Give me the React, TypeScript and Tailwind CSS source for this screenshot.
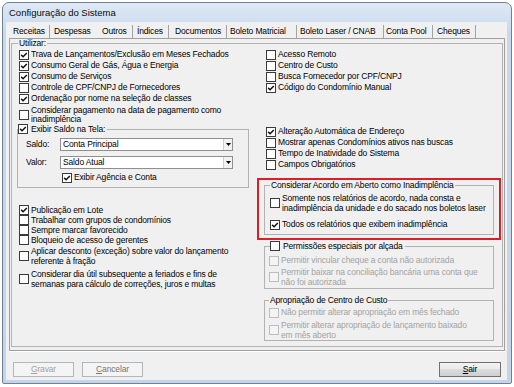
import type { ReactNode } from "react";

const FONT = "font-['Liberation_Sans',Arial,sans-serif]";

function Box({ checked = false, disabled = false }: { checked?: boolean; disabled?: boolean }) {
  return (
    <span
      className={`flex h-[10px] w-[10px] shrink-0 items-center justify-center border ${
        disabled ? "border-[#bdbdbd] bg-[#f4f4f4]" : "border-[#3a3a3a] bg-white"
      }`}
    >
      {checked && (
        <svg viewBox="0 0 8 8" className="h-[8px] w-[8px]">
          <path d="M1.2 3.9 L3.1 5.8 L6.8 1.9" fill="none" stroke="#111" strokeWidth="1.5" />
        </svg>
      )}
    </span>
  );
}

function Check({
  label,
  checked = false,
  disabled = false,
  multi = false,
  tall = "h-[11px]",
  className = "",
}: {
  label: ReactNode;
  checked?: boolean;
  disabled?: boolean;
  multi?: boolean;
  tall?: string;
  className?: string;
}) {
  return (
    <div className={`flex items-center gap-[2px] ${multi ? "" : tall} ${className}`}>
      <Box checked={checked} disabled={disabled} />
      <span
        className={`whitespace-nowrap ${multi ? "leading-[10px]" : "leading-[11px]"} ${
          disabled ? "text-[#a3a3a3]" : "text-black"
        }`}
      >
        {label}
      </span>
    </div>
  );
}

function Combo({ value }: { value: string }) {
  return (
    <div className="flex h-[13px] w-[173px] items-center border border-[#8f8f8f] bg-white">
      <span className="flex-1 pl-[2px] leading-[11px]">{value}</span>
      <span className="flex h-full w-[9px] items-center justify-center border-l border-[#cfcfcf] bg-[#f2f2f2]">
        <svg width="5" height="3" viewBox="0 0 5 3">
          <path d="M0 0h5L2.5 3z" fill="#000" />
        </svg>
      </span>
    </div>
  );
}

function Btn({ children, tone }: { children: ReactNode; tone: "off" | "dim" | "on" }) {
  const look =
    tone === "on"
      ? "w-[62px] border-[#707070] bg-[linear-gradient(#f2f2f2,#ebebeb_45%,#dddddd_50%,#cfcfcf)] text-black"
      : tone === "dim"
        ? "w-[61px] border-[#b3b7ba] bg-[#f4f4f4] text-[#767676]"
        : "w-[61px] border-[#b3b7ba] bg-[#f4f4f4] text-[#a2a2a2]";
  return (
    <div className={`flex h-[15px] items-center justify-center border leading-[11px] ${look}`}>{children}</div>
  );
}

const tabs = [
  { label: "Receitas", cls: "w-[40px] pl-[4px]", sep: true },
  { label: "Despesas", cls: "w-[49px] pl-[4px]", sep: false },
  { label: "Outros", cls: "w-[33px] pl-[3px]", sep: true },
  { label: "Índices", cls: "w-[35px] pl-[4px]", sep: true },
  { label: "Documentos", cls: "w-[57px] pl-[6px]", sep: true },
  { label: "Boleto Matricial", cls: "w-[69px] pl-[3px]", sep: true },
  { label: "Boleto Laser / CNAB", cls: "w-[86px] pl-[3px]", sep: true },
  { label: "Conta Pool", cls: "w-[48px] pl-[2px]", sep: true },
  { label: "Cheques", cls: "w-[42px] pl-[4px]", sep: true },
];

export default function App() {
  return (
    <div className={`h-[387px] w-[514px] bg-white pl-[2px] pt-[2px] text-[8.5px] text-black ${FONT}`}>
      <div className="flex h-[382px] w-[510px] flex-col rounded-t-[7px] rounded-b-[2px] border border-[#6f7f94] bg-[linear-gradient(#dfe9f6,#c8d8ec_30px,#c4d5ea)] pb-[3px] pl-[3px] pr-[4px]">
        {/* title bar */}
        <div className="flex h-[19px] items-center pl-[3px] pt-[1px] text-[9.5px] text-[#0b0b0b]">
          Configuração do Sistema
        </div>

        <div className="flex flex-1 flex-col bg-[#f0f0f0] tracking-[-0.15px]">
          {/* tab strip */}
          <div className="flex h-[16px] items-start pl-[3px]">
            {tabs.map((t) => (
              <div key={t.label} className="flex items-start">
                <div className={`flex h-[16px] items-center whitespace-nowrap pt-[2px] ${t.cls}`}>{t.label}</div>
                {t.sep && <div className="mt-[3px] h-[13px] w-px bg-[#a3a3a3]" />}
              </div>
            ))}
          </div>

          {/* tab page */}
          <div className="ml-[3px] flex h-[313px] w-[496px] flex-col border border-[#a0a0a0] px-[1px] pb-[3px] shadow-[0_1px_0_#fff]">
            <fieldset className="min-w-0 flex-1 border border-[#b2b2b2]">
              <legend className="ml-[6px] px-[1px] leading-[9px]">Utilizar:</legend>
              <div className="flex">
                {/* left column */}
                <div className="flex w-[245px] flex-col pl-[7px] pt-[1px]">
                  <Check checked label="Trava de Lançamentos/Exclusão em Meses Fechados" />
                  <Check checked label="Consumo Geral de Gás, Água e Energia" />
                  <Check checked label="Consumo de Serviços" />
                  <Check label="Controle de CPF/CNPJ de Fornecedores" />
                  <Check checked label="Ordenação por nome na seleção de classes" />
                  <div className="flex items-center gap-[2px] pt-[2px]">
                    <Box />
                    <span className="leading-[9px]">
                      Considerar pagamento na data de pagamento como
                      <br />
                      inadimplência
                    </span>
                  </div>

                  <fieldset className="-ml-[2px] w-[232px] border border-[#b2b2b2] pb-[4px]">
                    <legend className="flex items-center gap-[3px] pr-[2px] leading-[10px]">
                      <Box checked />
                      Exibir Saldo na Tela:
                    </legend>
                    <div className="mt-[4px] flex items-center pl-[8px]">
                      <span className="w-[34px]">Saldo:</span>
                      <Combo value="Conta Principal" />
                    </div>
                    <div className="mt-[5px] flex items-center pl-[8px]">
                      <span className="w-[34px]">Valor:</span>
                      <Combo value="Saldo Atual" />
                    </div>
                    <Check checked className="mt-[3px] pl-[44px]" label="Exibir Agência e Conta" />
                  </fieldset>

                  <Check checked tall="h-[10px]" className="mt-[17px]" label="Publicação em Lote" />
                  <Check tall="h-[10px]" label="Trabalhar com grupos de condomínios" />
                  <Check tall="h-[10px]" label="Sempre marcar favorecido" />
                  <Check tall="h-[10px]" label="Bloqueio de acesso de gerentes" />
                  <Check
                    multi
                    className="mt-[1px]"
                    label={
                      <>
                        Aplicar desconto (exceção) sobre valor do lançamento
                        <br />
                        referente à fração
                      </>
                    }
                  />
                  <Check
                    multi
                    className="mt-[3px]"
                    label={
                      <>
                        Considerar dia útil subsequente a feriados e fins de
                        <br />
                        semanas para cálculo de correções, juros e multas
                      </>
                    }
                  />
                </div>

                {/* right column */}
                <div className="flex flex-1 flex-col pt-[1px]">
                  <Check className="pl-[9px]" label="Acesso Remoto" />
                  <Check className="pl-[9px]" label="Centro de Custo" />
                  <Check className="pl-[9px]" label="Busca Fornecedor por CPF/CNPJ" />
                  <Check checked className="pl-[9px]" label="Código do Condomínio Manual" />
                  <Check checked className="mt-[33px] pl-[9px]" label="Alteração Automática de Endereço" />
                  <Check className="pl-[9px]" label="Mostrar apenas Condomínios ativos nas buscas" />
                  <Check className="pl-[9px]" label="Tempo de Inatividade do Sistema" />
                  <Check className="pl-[9px]" label="Campos Obrigatórios" />

                  <div className="mt-[8px] w-[244px] border-2 border-[#dc1f26] pb-[3px]">
                    <fieldset className="ml-[5px] w-[230px] border border-[#b2b2b2] pb-[4px]">
                      <legend className="ml-[5px] px-[1px] leading-[10px]">
                        Considerar Acordo em Aberto como Inadimplência
                      </legend>
                      <Check
                        multi
                        className="mt-[3px] pl-[5px]"
                        label={
                          <>
                            Somente nos relatórios de acordo, nada consta e
                            <br />
                            inadimplência da unidade e do sacado nos boletos laser
                          </>
                        }
                      />
                      <Check
                        checked
                        className="mt-[6px] pl-[5px]"
                        label="Todos os relatórios que exibem inadimplência"
                      />
                    </fieldset>
                  </div>

                  <fieldset className="ml-[7px] mt-[1px] w-[230px] border border-[#b2b2b2] pb-[1px]">
                    <legend className="ml-[5px] flex items-center gap-[3px] pr-[2px] leading-[10px]">
                      <Box />
                      Permissões especiais por alçada
                    </legend>
                    <Check
                      disabled
                      className="mt-[4px] pl-[4px]"
                      label="Permitir vincular cheque a conta não autorizada"
                    />
                    <Check
                      disabled
                      multi
                      className="mt-[1px] pl-[4px]"
                      label={
                        <>
                          Permitir baixar na conciliação bancária uma conta que
                          <br />
                          não foi autorizada
                        </>
                      }
                    />
                  </fieldset>

                  <fieldset className="ml-[7px] mt-[6px] w-[230px] border border-[#b2b2b2]">
                    <legend className="ml-[4px] px-[1px] leading-[10px]">Apropriação de Centro de Custo</legend>
                    <Check
                      disabled
                      className="mt-[2px] pl-[4px]"
                      label="Não permitir alterar apropriação em mês fechado"
                    />
                    <Check
                      disabled
                      multi
                      className="mt-[2px] pl-[4px]"
                      label={
                        <>
                          Permitir alterar apropriação de lançamento baixado
                          <br />
                          em mês aberto
                        </>
                      }
                    />
                  </fieldset>
                </div>
              </div>
            </fieldset>
          </div>

          {/* buttons */}
          <div className="mt-[11px] flex items-start pl-[7px] pr-[6px]">
            <Btn tone="off">
              <span className="underline underline-offset-[1px]">G</span>ravar
            </Btn>
            <div className="ml-[8px]">
              <Btn tone="dim">
                <span className="underline underline-offset-[1px]">C</span>ancelar
              </Btn>
            </div>
            <div className="flex-1" />
            <Btn tone="on">
              <span className="underline underline-offset-[1px]">S</span>air
            </Btn>
          </div>
        </div>
      </div>
    </div>
  );
}
